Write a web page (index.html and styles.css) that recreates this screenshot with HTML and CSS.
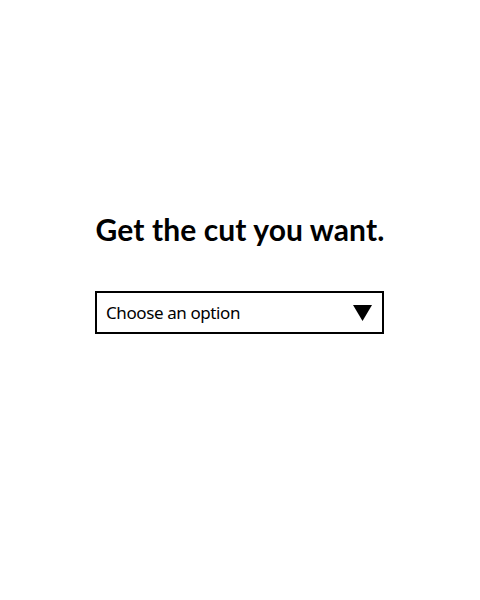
FILE: index.html
```html
<!DOCTYPE html>
<html lang="en">
<head>
<meta charset="utf-8">
<link rel="stylesheet" href="styles.css">
<title>Get the cut you want.</title>
</head>
<body>
<main class="page">
  <h1 class="title">Get the cut you want.</h1>
  <div class="select">
    <span class="select-label">Choose an option</span>
    <svg class="select-arrow" width="19" height="16" viewBox="0 0 19 16"><polygon points="0,0 19,0 9.5,16" fill="#000"/></svg>
  </div>
</main>
</body>
</html>
```

FILE: styles.css
```css
html, body {
  margin: 0;
  padding: 0;
  background: #fff;
}
.page {
  width: 480px;
  height: 600px;
  display: flex;
  flex-direction: column;
  align-items: center;
  font-family: "Noto Sans", "Open Sans", sans-serif;
  color: #000;
}
.title {
  margin: 207px 0 0 0;
  font-family: Lato, "Noto Sans", sans-serif;
  font-size: 30px;
  font-weight: 700;
  line-height: 44px;
  letter-spacing: 0.1px;
}
.select {
  margin-top: 40px;
  box-sizing: border-box;
  width: 289px;
  height: 43px;
  border: 2px solid #000;
  display: flex;
  align-items: center;
  justify-content: space-between;
  padding: 1px 10px 0 9px;
  margin-left: -1px;
}
.select-label {
  font-size: 17px;
  line-height: 20px;
  letter-spacing: -0.4px;
}
.select-arrow {
  display: block;
}
```
